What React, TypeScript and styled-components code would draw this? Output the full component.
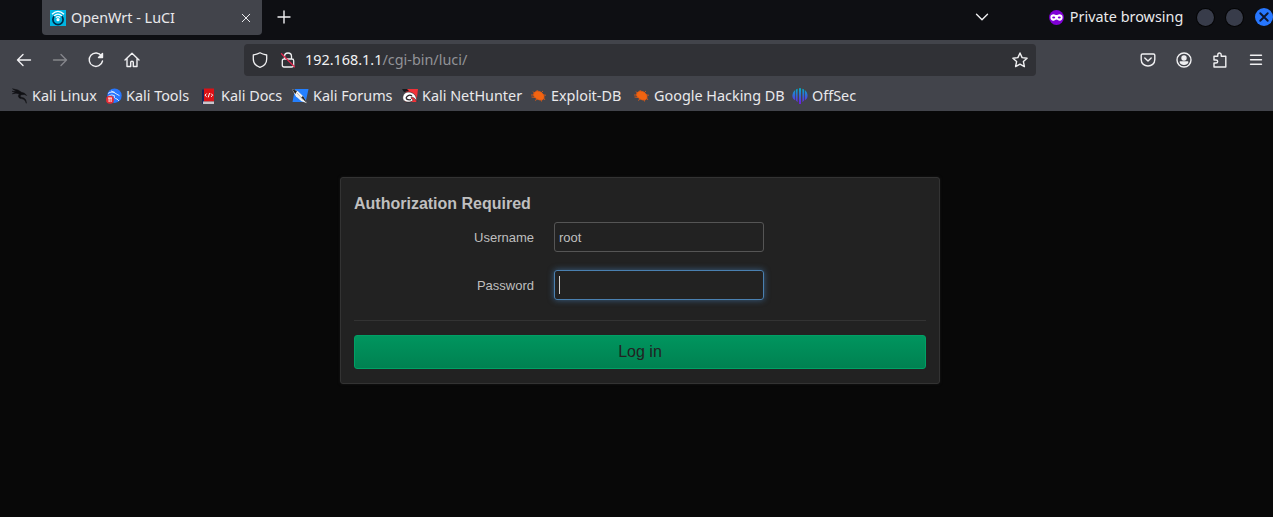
import React from 'react';
import styled, { createGlobalStyle } from 'styled-components';

const GlobalStyle = createGlobalStyle`
  * { box-sizing: border-box; }
  body { margin: 0; background: #080808; overflow: hidden; }
  svg { display: block; flex: none; overflow: visible; }
`;

const Window = styled.div`
  width: 1273px;
  height: 517px;
  display: flex;
  flex-direction: column;
  background: #080808;
  overflow: hidden;
  font-family: 'Noto Sans', sans-serif;
  font-size: 14.4px;
  color: #e9e9eb;
`;

const TabStrip = styled.header`
  height: 40px;
  flex: none;
  display: flex;
  align-items: flex-start;
  padding-left: 42px;
  background: #0e0f13;
`;

const Tab = styled.div`
  width: 221px;
  height: 35px;
  display: flex;
  align-items: center;
  padding: 0 10px 0 8px;
  border-radius: 0 0 4px 4px;
  background: #42444b;
`;

const Label = styled.span<{ $spacing?: number }>`
  white-space: nowrap;
  line-height: 20px;
  letter-spacing: ${(p) => p.$spacing ?? 0}px;
`;

const TabTitle = styled(Label)`
  flex: 1;
  margin-left: 5px;
`;

const StripButton = styled.div<{ $left: number }>`
  height: 34px;
  display: flex;
  align-items: center;
  margin-left: ${(p) => p.$left}px;
`;

const PrivateBadge = styled(StripButton)`
  width: 149px;
  gap: 6px;
`;

const WindowControls = styled.div`
  height: 34px;
  display: flex;
  align-items: center;
  gap: 12px;
`;

const ControlDot = styled.span`
  width: 17px;
  height: 17px;
  border-radius: 50%;
  background: #383c4a;
  box-shadow: 0 0 0 1px #050506;
`;

const CloseDot = styled.span`
  width: 18px;
  height: 18px;
  flex: none;
  display: flex;
  align-items: center;
  justify-content: center;
  border-radius: 50%;
  background: #2777ff;
`;

const Toolbar = styled.nav`
  height: 41px;
  flex: none;
  display: flex;
  align-items: center;
  padding: 0 9px 1px 16px;
  background: #42444b;
`;

const NavButtons = styled.div`
  width: 228px;
  display: flex;
  gap: 20px;
`;

const AddressBar = styled.div`
  width: 792px;
  height: 32px;
  display: flex;
  align-items: center;
  padding: 0 8px;
  gap: 12px;
  border-radius: 4px;
  background: #303136;
`;

const Url = styled(Label)`
  flex: 1;
  margin-left: -3px;
  color: #929398;
`;

const Host = styled.span`
  color: #f1f1f3;
`;

const ToolbarActions = styled.div`
  flex: 1;
  display: flex;
  justify-content: flex-end;
  gap: 20px;
`;

const Bookmarks = styled.nav`
  height: 30px;
  flex: none;
  display: flex;
  align-items: center;
  padding: 0 0 0 12px;
  background: #42444b;
`;

const Bookmark = styled.div<{ $width: number; $gap: number }>`
  width: ${(p) => p.$width}px;
  display: flex;
  flex: none;
  align-items: center;
  gap: ${(p) => p.$gap}px;
`;

const Page = styled.main`
  flex: 1;
  display: flex;
  align-items: flex-start;
  padding: 66px 0 0 340px;
  background: #080808;
  font-family: 'Liberation Sans', Arial, sans-serif;
  font-size: 13px;
  color: #bfbfbf;
`;

const LoginCard = styled.form`
  width: 600px;
  height: 207px;
  padding: 16px 13px 0;
  border: 1px solid #333;
  border-radius: 3px;
  background: #222;
  box-shadow: 0 0 3px #181818;
`;

const Title = styled.h1`
  margin: 0;
  height: 28px;
  font-size: 16px;
  line-height: 20px;
  font-weight: bold;
`;

const Field = styled.label`
  display: flex;
  align-items: center;
  height: 30px;
  margin-bottom: 18px;
`;

const FieldName = styled.span`
  width: 180px;
  margin-right: 20px;
  text-align: right;
`;

const FieldBox = styled.span<{ $focused?: boolean }>`
  width: 210px;
  height: 30px;
  display: flex;
  align-items: center;
  padding: 0 4px;
  border: 1px solid ${(p) => (p.$focused ? '#4a80b0' : '#555')};
  border-radius: 3px;
  box-shadow: ${(p) => (p.$focused ? '0 0 6px rgba(74, 136, 200, .6)' : 'none')};
`;

const Caret = styled.span`
  width: 1px;
  height: 18px;
  background: #d0d0d0;
`;

const Actions = styled.div`
  margin-top: 20px;
  padding-top: 14px;
  border-top: 1px solid #333;
`;

const LoginButton = styled.button`
  display: block;
  width: 100%;
  height: 34px;
  padding: 0;
  border: 1px solid #00a065;
  border-radius: 3px;
  background: linear-gradient(#00955e, #008151);
  color: #222;
  font: 16px/32px 'Liberation Sans', Arial, sans-serif;
`;

const Line = ({ size = 16, width = 1.4, color = '#f0f0f2', children }: {
  size?: number; width?: number; color?: string; children: React.ReactNode;
}) => (
  <svg width={size} height={size} viewBox="0 0 16 16" fill="none" stroke={color}
    strokeWidth={width} strokeLinecap="round" strokeLinejoin="round">{children}</svg>
);

const OpenWrtIcon = () => (
  <svg width="16" height="16" viewBox="0 0 16 16" fill="none">
    <path fill="#00b5e2" d="M0 0h16v16H0z" />
    <path d="M4.4 6a5.1 5.1 0 1 0 7.2 0" stroke="#002b49" strokeWidth="1.7" />
    <path d="M2 4.2Q8-1.4 14 4.2M4 6Q8 2.3 12 6M5.8 7.6Q8 5.8 10.2 7.6" stroke="#fff" strokeWidth="1.3" />
    <circle cx="8" cy="9.7" r="1.6" fill="#fff" />
  </svg>
);

const PrivateIcon = () => (
  <svg width="15" height="15" viewBox="0 0 15 15">
    <circle cx="7.5" cy="7.5" r="7.4" fill="#8000d7" />
    <path d="M1.4 7.2c0-2.2 1.5-3 3.1-3 1.4 0 2.1.8 3 .8s1.600-.8 3-.8c1.600 0 3.100.8 3.100 3 0 2.300-1.200 3.500-2.900 3.500-1.700 0-2.100-1.100-3.200-1.100S6 10.700 4.300 10.700C2.600 10.700 1.400 9.500 1.400 7.200z" fill="#fff" />
    <ellipse cx="4.700" cy="7.500" rx="1.500" ry="1" fill="#8000d7" />
    <ellipse cx="10.300" cy="7.500" rx="1.500" ry="1" fill="#8000d7" />
  </svg>
);

const dragon = 'M.5.800 6 2 9.500 4.300l3 .9 2.200 2.300-2.300-1-2.700.2c-2 .5-2 2.200.2 2.700 2.600.4 4.500 1.900 4.400 5.900-.8-2.800-2-4.200-5-4.700-3-.5-3.800-3-1.800-4.700L4 5.200.3 5.800l3-1.500L0 3.300l4.500.200z';

const KaliIcon = () => (
  <svg width="16" height="16" viewBox="0 0 16 16">
    <path d={dragon} fill="#101114" stroke="#101114" strokeWidth=".5" />
  </svg>
);

const ToolsIcon = () => (
  <svg width="16" height="16" viewBox="0 0 16 16" fill="none">
    <circle cx="8.500" cy="7.700" r="7.200" fill="#2777ff" />
    <path d="M2 5.500q4-3 8 .2l3.500 2M2.500 8q3.500-2 6-.3c-1 2 .5 3 2.500 3.300l2 2M5 3l4 1.500" stroke="#d6e5ff" strokeWidth="1" />
    <circle cx="4" cy="11.700" r="4" fill="#e52c35" />
    <path d="M2 10h4M3.100 10v4M5.100 10v4" stroke="#fff" strokeWidth=".9" />
  </svg>
);

const DocsIcon = () => (
  <svg width="16" height="16" viewBox="0 0 16 16" fill="none">
    <path d="M1 1.500h2V16H1z" fill="#1c2558" />
    <path d="M3 .500h10v13H3z" fill="#dc1116" />
    <path d="M2 13.500h11V16H2z" fill="#c9c5cb" />
    <path d="M5.700 5.500 4 7.200l1.700 1.600M10 5.500l1.700 1.700L10 8.800M8.600 5 7.200 9.400" stroke="#fff" />
  </svg>
);

const ForumsIcon = () => (
  <svg width="17" height="16" viewBox="0 0 17 16">
    <path d="M3 1h13.500l-2.800 13H.500z" fill="#2480ff" />
    <path d="m0 1 6 2.300 5.400 5.200 3.800 6.700-5.700-2-5.700-5z" fill="#f1f1f1" />
    <path d="m0 1 5 2-1.700 3zM9 9.500l2-1.500 4.500 7.500z" fill="#222" />
    <path d="m5 5 6.500 7" stroke="#999" strokeWidth=".7" />
  </svg>
);

const NetHunterIcon = () => (
  <svg width="16" height="16" viewBox="0 0 16 16" fill="none">
    <path d="M4 1h12l-1.500 13H3z" fill="#f13138" />
    <path d="M0 1h5l2 2-5 1z" fill="#17181b" />
    <path d="M14.800 13.500C12 8 8.500 9 9 10c.3 1 2 1 2 2s-3 2.500-6 2-5-2.500-4-6 5-5 9-3.200 4.500 5.500 4.800 8.700z" fill="#fff" stroke="#22191c" strokeWidth=".6" />
    <path d="M4 10c1.500-3 4-3.500 6-2M4 10c.5 1.700 3 2 5 1.700" stroke="#292126" strokeWidth="1.300" />
  </svg>
);

const BugIcon = () => (
  <svg width="16" height="16" viewBox="0 0 16 16" fill="none" stroke="#e95b10" strokeWidth=".8">
    <path d="M3 5c2-2.500 6-2.300 8.500.5 1.700 1.800 2.200 4.500.5 6-2 1-5 .500-7-1.300C3 9 2 7 3 5z" fill="#f26411" />
    <path d="m4 6-2-2.500M6.500 4 6 2M10 5l2-2M12 7l3 .2M12.500 10l1.500 2M10 11l.500 2.500M6.500 11 4 12.500M4 9.500.500 9M3 7H0" />
  </svg>
);

const OffSecIcon = () => (
  <svg width="16" height="16" viewBox="0 0 16 16">
    <defs><linearGradient id="offsec" x2="0" y2="1">
      <stop stopColor="#00b2c8" /><stop offset=".55" stopColor="#3f58db" /><stop offset="1" stopColor="#7019e1" />
    </linearGradient></defs>
    <path fill="url(#offsec)" d="M7 .300h2V16H7zM5.600.700v13.500L4 12.500V1.400zM3.200 1.900v10.300C-.5 10.700-.5 4.800 3.200 1.900zM10.400.700v13.500l1.600-1.700V1.400zM12.800 1.900v10.300c3.700-1.500 3.700-7.400 0-10.300z" />
  </svg>
);

const bookmarks = [
  { name: 'Kali Linux', icon: <KaliIcon />, width: 94, gap: 4 },
  { name: 'Kali Tools', icon: <ToolsIcon />, width: 95, gap: 4 },
  { name: 'Kali Docs', icon: <DocsIcon />, width: 91, gap: 4 },
  { name: 'Kali Forums', icon: <ForumsIcon />, width: 110, gap: 4 },
  { name: 'Kali NetHunter', icon: <NetHunterIcon />, width: 129, gap: 4 },
  { name: 'Exploit-DB', icon: <BugIcon />, width: 103, gap: 4 },
  { name: 'Google Hacking DB', icon: <BugIcon />, width: 158, gap: 4 },
  { name: 'OffSec', icon: <OffSecIcon />, width: 70, gap: 4 },
];

export default function App() {
  return (
    <>
      <GlobalStyle />
      <Window>
        <TabStrip>
          <Tab>
            <OpenWrtIcon />
            <TabTitle>OpenWrt - LuCI</TabTitle>
            <Line size={12} width={1.3}><path d="m3 3 10 10M13 3 3 13" /></Line>
          </Tab>
          <StripButton $left={14}><Line><path d="M8 2v12M2 8h12" /></Line></StripButton>
          <StripButton $left={682}><Line><path d="m2.500 5.200 5.500 5.500 5.500-5.500" /></Line></StripButton>
          <PrivateBadge $left={59}><PrivateIcon /><Label>Private browsing</Label></PrivateBadge>
          <WindowControls>
            <ControlDot /><ControlDot />
            <CloseDot><Line size={10} width={3} color="#0e1630"><path d="m2 2 12 12M14 2 2 14" /></Line></CloseDot>
          </WindowControls>
        </TabStrip>
        <Toolbar>
          <NavButtons>
            <Line><path d="M14.500 8H1.500M7 2.500 1.500 8 7 13.500" /></Line>
            <Line color="#85868b"><path d="M1.500 8h13M9 2.500 14.500 8 9 13.500" /></Line>
            <Line><path d="M13.500 4A6.700 6.700 0 1 0 14.500 9" /><path d="M14.500 1.500v4h-4z" fill="#f0f0f2" /></Line>
            <Line><path d="m1 8 7-6.700L15 8M3 6.300V14.500h3.700V10.300q0-1 1.300-1t1.300 1v4.200H13V6.300" /></Line>
          </NavButtons>
          <AddressBar>
            <Line width={1.3}><path d="M8 .800C10 2 12 2.500 14.700 3v4C14.700 11 12 14 8 15.300 4 14 1.300 11 1.300 7V3C4 2.500 6 2 8 .800z" /></Line>
            <Line width={1.3}>
              <path d="M4.500 7V4.500C4.500-.2 11.500-.2 11.500 4.500V7M4 7h8q1.700 0 1.700 1.700v4.600q0 1.700-1.700 1.700H4q-1.700 0-1.700-1.700V8.700Q2.300 7 4 7z" />
              <path d="m1.500 1.800 13 13" stroke="#e22850" />
            </Line>
            <Url><Host>192.168.1.1</Host>/cgi-bin/luci/</Url>
            <Line><path d="m8 1 2.100 4.600 5 .6-3.700 3.400 1 5L8 12.100l-4.400 2.500 1-5L.900 6.200l5-.6z" /></Line>
          </AddressBar>
          <ToolbarActions>
            <Line><path d="M2.500 2h11q1.300 0 1.300 1.300v4.200c0 8.700-13.600 8.700-13.600 0V3.300Q1.200 2 2.500 2zM4.800 6l3.200 3 3.200-3" /></Line>
            <Line><circle cx="8" cy="8" r="7" /><circle cx="8" cy="6" r="2" fill="#f0f0f2" /><path d="M4.300 10h7.400q-.700 2.300-3.700 2.300T4.300 10z" fill="#f0f0f2" /></Line>
            <Line><path d="M2 15v-4h2q1.700 0 1.700-1.500T4 8H2V4.300h3.800V2.800q0-1.800 1.700-1.800t1.700 1.800v1.500h4.600V15z" /></Line>
            <Line><path d="M2.500 3.200h11M2.500 7.700h11M2.500 12.200h11" /></Line>
          </ToolbarActions>
        </Toolbar>
        <Bookmarks>
          {bookmarks.map((b) => (
            <Bookmark key={b.name} $width={b.width} $gap={b.gap}>{b.icon}<Label>{b.name}</Label></Bookmark>
          ))}
        </Bookmarks>
        <Page>
          <LoginCard>
            <Title>Authorization Required</Title>
            <Field><FieldName>Username</FieldName><FieldBox>root</FieldBox></Field>
            <Field><FieldName>Password</FieldName><FieldBox $focused><Caret /></FieldBox></Field>
            <Actions><LoginButton type="button">Log in</LoginButton></Actions>
          </LoginCard>
        </Page>
      </Window>
    </>
  );
}
